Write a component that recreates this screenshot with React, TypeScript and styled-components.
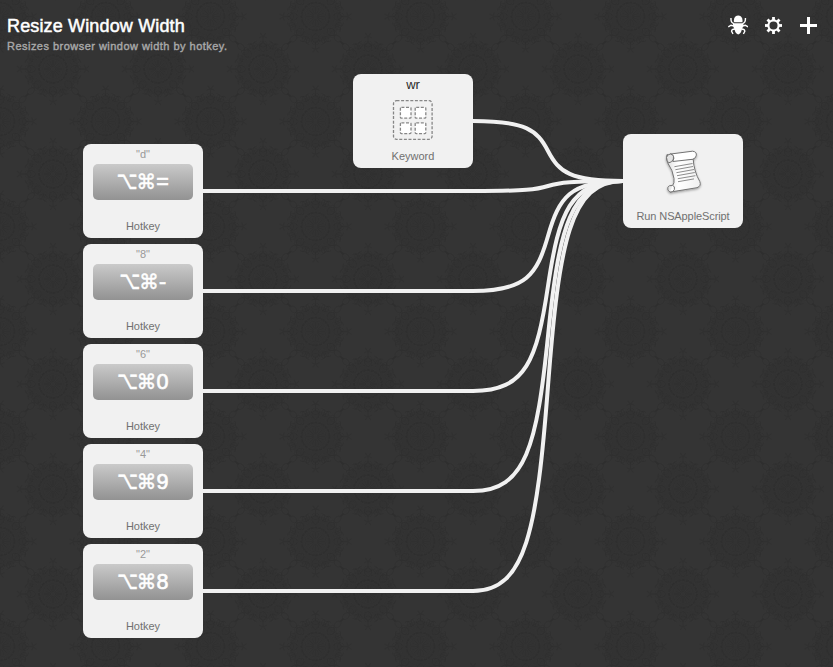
import React from "react";
import styled, { createGlobalStyle } from "styled-components";

const GlobalStyle = createGlobalStyle`
  * { box-sizing: border-box; }
  html, body, #root { margin: 0; height: 100%; }
  body { background: #343434; overflow: hidden; }
`;

const Editor = styled.main`
  position: relative;
  display: flex;
  flex-direction: column;
  width: 833px;
  height: 667px;
  overflow: hidden;
  font-family: "Liberation Sans", Arial, sans-serif;
`;

const Backdrop = styled.svg`
  position: absolute;
  inset: 0;
  width: 100%;
  height: 100%;
`;

const Header = styled.header`
  position: relative;
  display: flex;
  justify-content: space-between;
  height: 60px;
  padding: 15px 15px 0 7px;
`;

const Heading = styled.div`
  display: flex;
  flex-direction: column;
  white-space: nowrap;
`;

const Title = styled.h1`
  margin: 0;
  font-size: 18px;
  line-height: 22px;
  font-weight: 400;
  letter-spacing: 0.15px;
  color: #fff;
  -webkit-text-stroke: 0.5px #fff;
`;

const Subtitle = styled.p`
  margin: 2px 0 0;
  font-size: 11px;
  line-height: 14px;
  letter-spacing: 0.47px;
  color: #a8a8a8;
  -webkit-text-stroke: 0.4px #a8a8a8;
`;

const Tools = styled.nav`
  display: flex;
  gap: 15px;
`;

const ToolButton = styled.button`
  display: block;
  width: 20px;
  height: 20px;
  padding: 0;
  border: 0;
  background: none;
  color: #fff;
  svg { display: block; }
`;

const Canvas = styled.section`
  position: relative;
  flex: 1;
`;

const Wires = styled.svg`
  position: absolute;
  left: 0;
  top: -60px;
`;

const Node = styled.article<{ $x: number; $y: number }>`
  position: absolute;
  left: ${(p) => p.$x}px;
  top: ${(p) => p.$y - 60}px;
  display: flex;
  flex-direction: column;
  align-items: center;
  width: 120px;
  height: 94px;
  padding-top: 3px;
  border-radius: 8px;
  background: #f1f1f1;
`;

const NodeTitle = styled.div<{ $strong?: boolean }>`
  height: 14px;
  line-height: ${(p) => (p.$strong ? 16 : 14)}px;
  font-size: ${(p) => (p.$strong ? 13 : 11)}px;
  color: ${(p) => (p.$strong ? "#2a2a2a" : "#999")};
`;

const NodeBody = styled.div<{ $lift?: number }>`
  display: flex;
  align-items: center;
  justify-content: center;
  height: 58px;
  padding-bottom: ${(p) => p.$lift ?? 0}px;
`;

const NodeLabel = styled.div<{ $spacing?: number }>`
  height: 14px;
  line-height: 14px;
  font-size: 11px;
  letter-spacing: ${(p) => p.$spacing ?? 0}px;
  white-space: nowrap;
  color: #707070;
`;

const KeyCap = styled.div`
  display: flex;
  align-items: center;
  justify-content: center;
  width: 100px;
  height: 36px;
  border-radius: 5px;
  background: linear-gradient(#cacaca, #929292);
  color: #fff;
  line-height: 36px;
`;

const Modifier = styled.span<{ $width: number; $size: number; $stretch: number; $lift: number }>`
  display: flex;
  justify-content: center;
  width: ${(p) => p.$width}px;
  font-family: "DejaVu Sans", sans-serif;
  font-size: ${(p) => p.$size}px;
  transform: translateY(${(p) => -p.$lift}px) scaleY(${(p) => p.$stretch});
  -webkit-text-stroke: 0.4px #fff;
`;

const KeyChar = styled.span`
  padding-left: 1px;
  font-size: 21.5px;
  -webkit-text-stroke: 0.7px #fff;
`;

const QUARTERS = [0, 90, 180, 270];
const EIGHTHS = [0, 45, 90, 135, 180, 225, 270, 315];
const SIXTEENTHS = Array.from({ length: 16 }, (_, i) => i * 22.5);

function Rosette({ x, y }: { x: number; y: number }) {
  return (
    <g transform={`translate(${x} ${y})`} fill="none" stroke="#2a2a2a" strokeOpacity="0.42">
      <circle r="26" fill="#2e2e2e" fillOpacity="0.3" stroke="none" />
      <circle r="14" strokeWidth="2" strokeDasharray="3 0.8" />
      <circle r="10.5" strokeWidth="0.6" />
      <circle r="19" strokeWidth="1" strokeDasharray="2 2" />
      {SIXTEENTHS.map((a) => (
        <path key={a} transform={`rotate(${a})`} d="M0-2V-9M-2-12.5L0-14.5L2-12.5M-4-24Q-3-30 0-27Q3-30 4-24Q0-20-4-24" strokeWidth="0.9" />
      ))}
      {EIGHTHS.map((a) => (
        <path key={a} transform={`rotate(${a})`} d="M0-17Q-6-21-2-25Q0-27 2-25Q6-21 0-17M-7-20Q-12-27-6-28M7-20Q12-27 6-28" strokeWidth="1.2" />
      ))}
      {QUARTERS.map((a) => (
        <g key={a} transform={`rotate(${a})`}>
          <path d="M0-26V-32M0-32Q-1-34-3-36M0-32Q1-34 3-36M-4-31Q0-34 4-31" strokeWidth="1.3" />
          <path transform="rotate(45)" d="M0-26Q-4-30-2-34Q2-37 0-40M0-26Q4-30 2-34Q-2-37 0-40" strokeWidth="1.1" />
        </g>
      ))}
    </g>
  );
}

function Pattern() {
  return (
    <Backdrop aria-hidden="true">
      <defs>
        <pattern id="damask" width="105" height="105" patternUnits="userSpaceOnUse" x="-52" y="-36">
          <Rosette x={52.5} y={52.5} />
          {[0, 105].map((x) => [0, 105].map((y) => <Rosette key={`${x}-${y}`} x={x} y={y} />))}
        </pattern>
      </defs>
      <rect width="100%" height="100%" fill="#343434" />
      <rect width="100%" height="100%" fill="url(#damask)" />
    </Backdrop>
  );
}

function SpiderIcon() {
  return (
    <svg width="20" height="20" viewBox="0 0 20 20">
      <path d="M6.2 7.2Q5.4 6.4 6.2 3.6Q7.2.6 10.2.6Q13.2.6 14.2 3.6Q15 6.4 14.2 7.2Z" fill="currentColor" />
      <path d="M4.9 8.2H15.5Q16 11.4 13.8 14.4Q13.2 18.4 10.2 19.4Q7.2 18.4 6.6 14.4Q4.4 11.4 4.9 8.2Z" fill="currentColor" />
      <path
        d="M6 8.6Q2.6 7.6 3 3M14.4 8.6Q17.8 7.6 17.4 3M6 11L3 10.2L.3 11.9M14.4 11L17.4 10.2L20 11.9M7 14Q3.4 14 3.6 16.4L5 19M13.4 14Q17 14 16.8 16.4L15.4 19"
        fill="none"
        stroke="currentColor"
        strokeWidth="1.4"
      />
    </svg>
  );
}

function GearIcon() {
  return (
    <svg width="20" height="20" viewBox="0 0 20 20">
      <circle cx="10.5" cy="10.5" r="5.1" fill="none" stroke="currentColor" strokeWidth="2.1" />
      {EIGHTHS.map((a) => (
        <path key={a} transform={`rotate(${a} 10.5 10.5)`} d="M9.1 5.4V2H11.9V5.4Z" fill="currentColor" />
      ))}
    </svg>
  );
}

function PlusIcon() {
  return (
    <svg width="20" height="20" viewBox="0 0 20 20">
      <path d="M10.5 2V19M2 10.5H19" stroke="currentColor" strokeWidth="3" />
    </svg>
  );
}

function KeywordIcon() {
  return (
    <svg width="42" height="42" viewBox="0 0 42 42" fill="none" stroke="#868686" strokeWidth="1.3" strokeDasharray="3 1.6">
      <rect x="1.5" y="1.7" width="38.6" height="38.6" rx="3" />
      {[8.4, 23.2].map((x) =>
        [8.4, 23.8].map((y) => <rect key={`${x}-${y}`} x={x} y={y} width="10.6" height="10.8" rx="1" fill="#fff" />)
      )}
    </svg>
  );
}

function ScriptIcon() {
  return (
    <svg width="44" height="48" viewBox="0 0 44 48">
      <defs>
        <linearGradient id="paper" x1="0" x2="1">
          <stop offset="0" stopColor="#dedede" />
          <stop offset="0.35" stopColor="#fff" />
          <stop offset="1" stopColor="#f0f0f0" />
        </linearGradient>
        <filter id="soft" x="-20%" y="-20%" width="140%" height="150%">
          <feDropShadow dx="0" dy="1.2" stdDeviation="1" floodOpacity="0.35" />
        </filter>
      </defs>
      <g transform="translate(0 -1.5)">
        <g stroke="#737373" strokeWidth="1" strokeLinejoin="round" filter="url(#soft)">
          <path d="M6 7Q4.5 10 6.5 15Q12 23 13 31Q13.6 36 11.6 38Q8 37.5 6.8 39.8Q6 43.2 9 44.6L36 40.2Q40.6 38.5 38.8 34Q33 24 32.2 11.8L16 12Z" fill="url(#paper)" />
          <path d="M11.6 38Q14.2 38.5 13.4 42Q12.5 44.7 9 44.6" fill="#fff" />
          <path d="M9 6.6L31.5 3.7Q36.2 4.2 35.2 8.4Q34.4 11.2 31.5 11.8L11.8 14Q13.6 10.4 12.4 8.4Q10.8 6.2 9 6.6Z" fill="#fff" />
          <path d="M9.4 6.5Q6 7 5.5 10Q5.8 13 7.4 15.4Q11 15.2 12.4 11.6Q13 8.2 11.4 7.2Q9.8 7 9.4 6.5Z" fill="#e4e4e4" />
        </g>
        <path
          d="M13.4 19.2L31.5 16M14.4 22.2L32 19M15.4 25.2L33 22M16 28.2L33.8 25M16.8 31.2L34.4 28.2M17 34.2L33 31.4"
          stroke="#8d8d8d"
          strokeWidth="1"
        />
      </g>
    </svg>
  );
}

const HOTKEYS = [
  { arg: "d", char: "=" },
  { arg: "8", char: "-" },
  { arg: "6", char: "0" },
  { arg: "4", char: "9" },
  { arg: "2", char: "8" },
];

const TARGET = { x: 623, y: 181 };

// A wire leaves horizontally, steepens to the midpoint, then mirrors itself into the target.
function wirePath(fromX: number, y: number) {
  const bend = 473;
  const half = (TARGET.y - y) / 2;
  const mid = y + half;
  return `M${fromX} ${y}H${bend}C${bend + 53} ${y} ${bend + 64} ${y + half * 0.3} ${bend + 75} ${mid}C${TARGET.x - 64} ${TARGET.y - half * 0.3} ${TARGET.x - 53} ${TARGET.y} ${TARGET.x} ${TARGET.y}`;
}

export default function App() {
  return (
    <>
      <GlobalStyle />
      <Editor>
        <Pattern />
        <Header>
          <Heading>
            <Title>Resize Window Width</Title>
            <Subtitle>Resizes browser window width by hotkey.</Subtitle>
          </Heading>
          <Tools>
            <ToolButton aria-label="Debug"><SpiderIcon /></ToolButton>
            <ToolButton aria-label="Settings"><GearIcon /></ToolButton>
            <ToolButton aria-label="Add"><PlusIcon /></ToolButton>
          </Tools>
        </Header>
        <Canvas>
          <Wires width="833" height="667" fill="none" stroke="#f1f1f1" strokeWidth="4">
            <path d={wirePath(470, 121)} />
            {HOTKEYS.map((k, i) => (
              <path key={k.arg} d={wirePath(200, 191 + i * 100)} />
            ))}
          </Wires>
          {HOTKEYS.map((k, i) => (
            <Node key={k.arg} $x={83} $y={144 + i * 100}>
              <NodeTitle>"{k.arg}"</NodeTitle>
              <NodeBody $lift={16}>
                <KeyCap>
                  <Modifier $width={20} $size={18} $stretch={1.4} $lift={1.5}>⌥</Modifier>
                  <Modifier $width={18} $size={19.5} $stretch={1.06} $lift={-0.5}>⌘</Modifier>
                  <KeyChar>{k.char}</KeyChar>
                </KeyCap>
              </NodeBody>
              <NodeLabel>Hotkey</NodeLabel>
            </Node>
          ))}
          <Node $x={353} $y={74}>
            <NodeTitle $strong>wr</NodeTitle>
            <NodeBody><KeywordIcon /></NodeBody>
            <NodeLabel>Keyword</NodeLabel>
          </Node>
          <Node $x={623} $y={134}>
            <NodeTitle />
            <NodeBody $lift={15}><ScriptIcon /></NodeBody>
            <NodeLabel $spacing={-0.1}>Run NSAppleScript</NodeLabel>
          </Node>
        </Canvas>
      </Editor>
    </>
  );
}
